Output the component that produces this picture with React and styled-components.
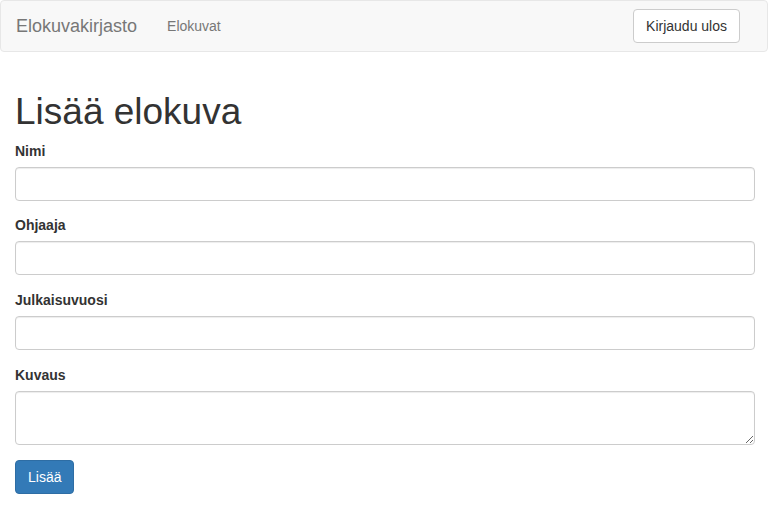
import React from 'react'
import styled, {createGlobalStyle} from 'styled-components'

const GlobalStyle = createGlobalStyle`
    * {
        box-sizing: border-box;
    }
    body {
        margin: 0;
        font-family: "Liberation Sans", Arial, sans-serif;
        font-size: 14px;
        line-height: 1.42857;
        color: #333;
        background: #fff;
    }
`

const Navbar = styled.nav`
    display: flex;
    align-items: center;
    height: 52px;
    padding: 0 27px 0 15px;
    background-color: #f8f8f8;
    border: 1px solid #e7e7e7;
    border-radius: 4px;
    margin-bottom: 20px;
`
const Brand = styled.a`
    font-size: 18px;
    line-height: 20px;
    color: #777;
    text-decoration: none;
    padding: 15px 0;
`
const NavLink = styled.a`
    font-size: 14px;
    line-height: 20px;
    color: #777;
    text-decoration: none;
    padding: 15px;
    margin-left: 15px;
`
const Spacer = styled.div`
    flex: 1;
`
const Button = styled.button`
    font-family: inherit;
    font-size: 14px;
    line-height: 20px;
    padding: 6px 12px;
    border-radius: 4px;
    border: 1px solid ${({$primary}) => ($primary ? '#2e6da4' : '#ccc')};
    background-color: ${({$primary}) => ($primary ? '#337ab7' : '#fff')};
    color: ${({$primary}) => ($primary ? '#fff' : '#333')};
    cursor: pointer;
`
const Main = styled.main`
    display: flow-root;
    padding: 0 13px 0 15px;
`
const H1 = styled.h1`
    font-size: 37px;
    font-weight: 500;
    line-height: 39.6px;
    margin: 20px 0 10px;
`
const FormGroup = styled.div`
    margin-bottom: 15.67px;
`
const Label = styled.label`
    display: block;
    font-weight: 700;
    margin-bottom: 5px;
`
const Input = styled.input`
    display: block;
    width: 100%;
    height: 34px;
    padding: 6px 12px;
    font-family: inherit;
    font-size: 14px;
    border: 1px solid #ccc;
    border-radius: 4px;
    box-shadow: inset 0 1px 1px rgba(0, 0, 0, 0.075);
`
const TextArea = styled(Input).attrs({as: 'textarea'})`
    height: 54px;
    resize: vertical;
`

function App() {
    return (
        <>
            <GlobalStyle />
            <Navbar>
                <Brand href='#'>Elokuvakirjasto</Brand>
                <NavLink href='#'>Elokuvat</NavLink>
                <Spacer />
                <Button>Kirjaudu ulos</Button>
            </Navbar>
            <Main>
                <H1>Lisää elokuva</H1>
                <FormGroup>
                    <Label>Nimi</Label>
                    <Input type='text' />
                </FormGroup>
                <FormGroup>
                    <Label>Ohjaaja</Label>
                    <Input type='text' />
                </FormGroup>
                <FormGroup>
                    <Label>Julkaisuvuosi</Label>
                    <Input type='text' />
                </FormGroup>
                <FormGroup>
                    <Label>Kuvaus</Label>
                    <TextArea rows={2} />
                </FormGroup>
                <Button $primary>Lisää</Button>
            </Main>
        </>
    )
}

export default App
